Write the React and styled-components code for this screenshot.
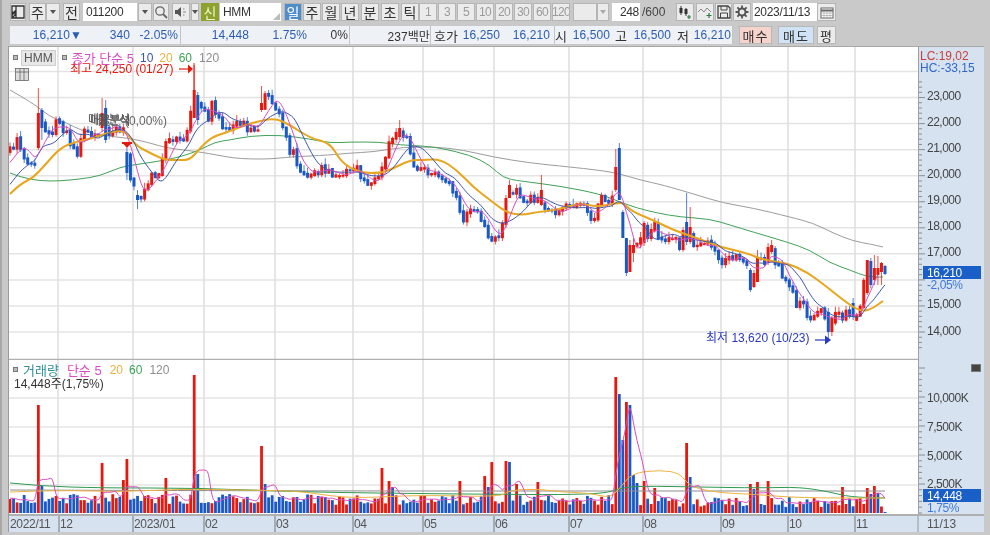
import React from "react";
import styled, { createGlobalStyle } from "styled-components";

const FONT = `"Liberation Sans", "Noto Sans CJK KR", sans-serif`;
const BLUE = "#2a5cb4";
const RED = "#e6190f";
const CANDLE_BLUE = "#1a58c6";

const Global = createGlobalStyle`
  html, body { margin: 0; padding: 0; background: #c9c9c9; overflow: hidden; }
  #root { width: 990px; height: 535px; }
`;

const Page = styled.div`
  width: 990px; height: 535px; background: #c9c9c9; font: 12px ${FONT};
  color: #333; box-sizing: border-box; filter: blur(0.4px); overflow: hidden;
  border-left: 2px solid #a8a8a8; display: flex; flex-direction: column;
`;
const Toolbar = styled.div`
  display: flex; align-items: center; height: 24px; padding-left: 8px; flex: none;
`;
const Tool = styled.div`
  flex: none; box-sizing: border-box; width: ${p => p.$w}px; height: 18px; margin-left: ${p => p.$ml || 0}px;
  display: flex; align-items: center; justify-content: center; font-size: 14px;
  background: ${p => p.$active ? "#4f8ccb" : "#ebebeb"};
  color: ${p => p.$active ? "#fff" : p.$dim ? "#9a9a9a" : "#333"};
  border: 1px solid ${p => p.$active ? "#4f8ccb" : "#f8f8f8"};
  outline: 1px solid #b5b5b5; outline-offset: -1px; letter-spacing: ${p => p.$dim ? "-0.6px" : "0"};
  ${p => p.$dim && "font-size: 12px;"}
`;
const Caret = styled.span`
  width: 0; height: 0; border: 3.5px solid transparent; border-top: 4px solid ${p => p.$dim ? "#aaa" : "#555"}; border-bottom: 0;
`;
const Field = styled.div`
  flex: none; box-sizing: border-box; width: ${p => p.$w}px; height: 18px; margin-left: ${p => p.$ml || 0}px;
  background: #fff; display: flex; align-items: center; padding: 0 ${p => p.$pad ?? 3}px;
  justify-content: ${p => p.$right ? "flex-end" : "flex-start"}; font-size: 12px; letter-spacing: -0.3px; position: relative;
`;
const Grip = styled.span`
  position: absolute; right: 1px; bottom: 1px; width: 0; height: 0;
  border-left: 7px solid transparent; border-bottom: 7px solid #bbb;
`;
const Tag = styled.div`
  flex: none; width: 18px; height: 18px; margin-left: ${p => p.$ml || 0}px; background: #8ca12e; color: #eef3c8;
  display: flex; align-items: center; justify-content: center; font-size: 14px;
`;
const Plain = styled.div`
  flex: none; width: ${p => p.$w}px; margin-left: ${p => p.$ml || 0}px; color: #444; font-size: 12px;
`;
const InfoRow = styled.div`
  display: flex; height: 18px; margin-top: 2px; padding-left: 8px; flex: none;
`;
const Cell = styled.div`
  flex: none; box-sizing: border-box; width: ${p => p.$w}px; margin-left: ${p => p.$ml || 0}px;
  background: #eef1f5; display: flex; align-items: center; border-right: 1px solid #c4c4c4;
`;
const Value = styled.span`
  flex: none; width: ${p => p.$w}px; text-align: right; font-size: ${p => p.$ko ? 13 : 12}px; white-space: nowrap;
  letter-spacing: 0.1px; color: ${p => p.$dark ? "#333" : BLUE};
`;
const Trade = styled.div`
  flex: none; box-sizing: border-box; width: ${p => p.$w}px; margin-left: ${p => p.$ml || 0}px;
  background: ${p => p.$bg}; color: #333; display: flex; align-items: center; justify-content: center;
  font-size: 13px; letter-spacing: 1px; border: 1px solid #b8b8b8;
`;
const Frame = styled.div`
  margin: 2px 0 0 7px; width: 975px; height: 485px; flex: none; display: grid;
  grid-template-columns: 909px 66px; grid-template-rows: 313px 154px 18px; background: #fff;
  border-top: 1px solid #a8a8a8; box-sizing: content-box; box-shadow: -1px 0 #9a9a9a;
`;
const Pane = styled.div`
  position: relative; background: #fff; overflow: hidden;
`;
const AxisPane = styled.div`
  position: relative; background: #d6e2f0; overflow: hidden; border-left: 1px solid #a0a0a0; box-sizing: border-box;
`;
const DateRow = styled.div`
  grid-column: 1 / -1; background: #d6e2f0; border-top: 2px solid #b0b0b0; box-sizing: border-box; overflow: hidden;
`;
const Drawing = styled.svg`
  display: block; font-family: ${FONT};
`;
const Legend = styled.div`
  position: absolute; left: ${p => p.$left}px; top: ${p => p.$top}px; display: flex; align-items: center; font-size: 12px; white-space: nowrap;
`;
const Item = styled.span`
  color: ${p => p.$c}; margin-left: ${p => p.$ml || 0}px; font-size: ${p => p.$ko ? 13 : 12}px;
`;
const Chip = styled.span`
  margin-left: 3px; padding: 0 2px; height: 14px; line-height: 14px; background: #e7e7e7; border: 1px solid #cfcfcf; color: #555; font-size: 12px;
`;
const Dot = styled.span`
  width: 5px; height: 5px; background: #bbb; border: 1px solid #777; box-sizing: border-box; margin-left: ${p => p.$ml || 0}px;
`;
const Corner = styled.div`
  position: absolute; right: 3px; top: 4px; width: 8px; height: 6px; background: #444; border: 1px solid #777;
`;

function rng(seed) {
  let s = seed;
  return () => { s = (s * 16807) % 2147483647; return (s - 1) / 2147483646; };
}
const interp = (w, x) => {
  if (x <= w[0][0]) return w[0][1];
  for (let i = 1; i < w.length; i++) {
    if (x <= w[i][0]) {
      const t = (x - w[i - 1][0]) / (w[i][0] - w[i - 1][0]);
      return w[i - 1][1] + t * (w[i][1] - w[i - 1][1]);
    }
  }
  return w[w.length - 1][1];
};

const closeW = [[10,152],[13,145],[18,140],[21,148],[25,157],[30,163],[34,170],[38,128],[43,123],[50,137],[56,123],[60,117],[65,135],[68,135],[74,150],[77,152],[81,135],[86,130],[92,135],[99,138],[102,115],[106,125],[110,135],[115,125],[120,130],[124,132],[127,157],[130,180],[134,190],[137,198],[140,198],[146,183],[152,172],[155,175],[160,173],[165,147],[171,135],[178,140],[182,140],[188,125],[194,100],[197,107],[204,112],[207,120],[212,105],[215,112],[220,120],[225,130],[230,132],[235,125],[240,122],[247,127],[258,127],[262,103],[265,95],[270,100],[275,103],[280,110],[284,128],[290,150],[293,150],[296,163],[301,170],[305,175],[311,172],[318,170],[322,170],[328,168],[335,177],[340,176],[350,170],[358,170],[365,182],[371,185],[378,175],[383,167],[388,148],[392,137],[398,130],[403,135],[407,140],[413,163],[418,172],[422,167],[427,173],[434,172],[440,178],[445,182],[450,185],[455,193],[458,203],[461,217],[465,218],[470,210],[476,205],[481,217],[486,230],[490,237],[496,237],[501,232],[506,200],[510,192],[516,190],[520,200],[525,200],[530,197],[536,200],[540,200],[543,205],[548,208],[553,213],[557,217],[561,210],[565,203],[570,205],[577,203],[580,205],[585,208],[590,215],[595,222],[598,205],[600,197],[608,200],[612,197],[615,170],[620,198],[623,236],[627,272],[630,247],[634,247],[640,240],[643,225],[648,235],[654,222],[660,243],[664,240],[668,237],[676,240],[679,250],[683,232],[686,238],[690,232],[693,248],[698,247],[710,243],[716,250],[718,260],[722,266],[724,260],[730,258],[735,255],[740,258],[747,265],[749,288],[753,275],[757,260],[766,262],[768,250],[772,247],[775,265],[780,268],[788,288],[792,290],[798,308],[801,300],[810,320],[815,318],[821,305],[828,330],[833,320],[838,310],[842,318],[847,312],[853,318],[860,310],[866,264],[871,282],[875,270],[878,270],[881,262],[885,272]];

const candleFix = [[38,113,148,88,150,"r"],[43,110,128,108,140,"b"],[102,113,128,98,132,"r"],[107,108,140,100,143,"b"],[127,152,173,148,180,"b"],[137,195,200,190,209,"b"],[194,90,118,65,118,"r"],[197,95,120,92,125,"b"],[262,103,110,86,112,"r"],[398,128,137,120,140,"r"],[506,198,225,195,228,"r"],[510,185,198,180,198,"r"],[540,190,205,175,206,"r"],[615,167,190,149,192,"r"],[620,148,200,143,200,"b"],[623,212,238,210,238,"b"],[627,238,273,238,276,"b"],[630,245,272,240,272,"r"],[634,245,253,238,262,"r"],[643,223,243,221,246,"r"],[686,222,242,193,245,"b"],[690,227,242,207,244,"r"],[749,270,290,268,292,"b"],[753,273,287,270,288,"r"],[757,257,282,250,282,"r"],[768,247,263,243,265,"r"],[772,245,252,240,254,"r"],[828,312,332,308,340,"b"],[833,318,332,316,336,"r"],[853,303,317,298,320,"b"],[866,260,293,260,295,"r"],[871,261,285,258,288,"b"],[875,268,280,255,285,"r"],[878,268,275,256,285,"r"],[881,263,272,262,285,"r"],[885,266,274,265,275,"b"]];

const volFix = [[38,405,"r"],[42,486,"b"],[102,463,"r"],[126,459,"r"],[123,480,"r"],[165,478,"r"],[194,375,"r"],[197,474,"b"],[262,446,"r"],[265,484,"b"],[382,468,"r"],[389,481,"r"],[392,487,"b"],[459,481,"r"],[484,476,"r"],[488,487,"b"],[491,462,"r"],[505,461,"r"],[509,462,"b"],[516,484,"r"],[538,482,"r"],[615,377,"r"],[620,394,"b"],[624,440,"b"],[626,402,"r"],[629,405,"b"],[633,475,"b"],[636,483,"b"],[643,481,"r"],[653,488,"r"],[686,443,"r"],[690,477,"b"],[750,484,"r"],[753,489,"b"],[757,482,"r"],[768,481,"r"],[841,487,"r"],[866,488,"r"],[870,494,"b"],[873,486,"r"],[877,493,"b"]];

const COUNT = 248;
const barX = i => 10 + (i * 875) / (COUNT - 1);
const nearest = x => Math.round(((x - 10) * (COUNT - 1)) / 875);

const r = rng(4711);
const closes = [];
const smooth = [];
const candles = [];
for (let i = 0; i < COUNT; i++) {
  const x = barX(i);
  const s = interp(closeW, x);
  const amp = x > 330 ? 7 : 10;
  const c = s + (r() - 0.5) * amp;
  const o = i ? closes[i - 1] : c + 4;
  closes.push(c);
  smooth.push(s);
  const top = Math.min(o, c) - r() * 1.5, bot = Math.max(o, c) + 1.5;
  candles.push({ x, top, bot, wt: top - r() * 6, wb: bot + r() * 4, red: c < o });
}
candleFix.forEach(([x, t, b, wt, wb, col]) => {
  candles[nearest(x)] = { x: barX(nearest(x)), top: t, bot: b, wt, wb, red: col === "r" };
});

const vols = [];
const volRed = candles.map(c => c.red);
for (let i = 0; i < COUNT; i++) {
  const x = barX(i);
  const baseTop = x < 330 ? 498 : x < 620 ? 499 : 501;
  vols.push(baseTop + r() * 10 - 4);
}
volFix.forEach(([x, t, c]) => { vols[nearest(x)] = t; volRed[nearest(x)] = c === "r"; });
vols[COUNT - 1] = 512;

const sma = (arr, n, pad) => arr.map((_, i) => {
  let s = 0;
  for (let k = 0; k < n; k++) s += i - k >= 0 ? arr[i - k] : pad;
  return s / n;
});
const curve = w => {
  let d = `M${w[0][0]} ${w[0][1]}`;
  for (let i = 1; i < w.length - 1; i++) {
    const mx = (w[i][0] + w[i + 1][0]) / 2, my = (w[i][1] + w[i + 1][1]) / 2;
    d += `Q${w[i][0]} ${w[i][1]} ${mx} ${my}`;
  }
  const last = w[w.length - 1];
  return `${d}L${last[0]} ${last[1]}`;
};
const seriesPts = arr => arr.map((v, i) => [+barX(i).toFixed(1), +v.toFixed(1)]);

const ma5 = sma(smooth, 5, 165);
const ma10 = sma(smooth, 10, 188);
const ma20 = [[10,194],[20,184],[33,178],[45,165],[60,148],[75,142],[90,139],[110,132],[125,130],[135,145],[150,153],[165,160],[178,160],[190,160],[200,148],[212,137],[225,133],[240,127],[255,122],[275,118],[290,125],[310,138],[330,143],[340,160],[350,168],[363,173],[380,173],[390,170],[410,160],[423,160],[440,159],[457,170],[473,187],[490,200],[507,213],[523,215],[537,212],[557,210],[580,203],[597,207],[617,203],[623,203],[633,212],[653,220],[673,230],[697,238],[720,247],[747,253],[763,260],[787,263],[807,272],[827,287],[847,303],[860,311],[870,310],[883,301]];
const ma60 = [[10,173],[20,177],[40,181],[60,181],[80,179],[100,176],[120,167],[140,164],[160,161],[180,157],[200,150],[215,142],[230,140],[250,136],[280,135],[310,139],[330,143],[350,142],[380,142],[400,145],[423,146],[440,148],[470,155],[490,165],[503,178],[520,181],[560,186],[600,194],[620,202],[637,208],[657,213],[680,217],[710,219],[730,225],[753,232],[787,242],[810,250],[830,263],[850,270],[867,277],[883,277]];
const ma120 = [[10,90],[33,103],[50,117],[67,123],[80,130],[100,135],[117,137],[133,139],[150,143],[167,148],[200,152],[217,155],[233,158],[250,159],[270,159],[290,157],[330,155],[350,153],[373,152],[403,147],[437,147],[463,150],[493,157],[530,163],[570,167],[597,170],[617,173],[640,180],[663,185],[697,195],[723,203],[753,208],[790,217],[813,223],[833,233],[853,241],[870,244],[883,247]];

const volMa5 = sma(vols, 5, 498);
const volMa20 = [[10,492],[60,490],[120,492],[180,489],[240,490],[300,491],[330,496],[360,498],[420,495],[500,497],[510,490],[540,489],[560,492],[590,493],[610,498],[620,488],[632,473],[660,470],[680,473],[690,487],[720,493],[750,494],[800,498],[885,498]];
const volMa60 = [[10,483],[40,486],[100,488],[200,488],[300,492],[450,494],[600,495],[620,488],[640,486],[700,487],[760,488],[800,487],[830,492],[850,497],[885,498]];
const volMa120 = [[10,490],[300,491],[600,491],[625,491],[885,491]];

const priceTicks = [23000,22000,21000,20000,19000,18000,17000,16000,15000,14000];
const priceY = p => 332 - (p - 14000) * 0.02605;
const vGrid = [58,133,204,275,353,423,494,569,643,721,788,855];
const fmt = n => n.toLocaleString("en-US");

const MaLine = styled.path`
  fill: none; stroke: ${p => p.$c}; stroke-width: ${p => p.$sw || 1}; stroke-linejoin: round;
`;

const Candles = () => (
  <>
    {candles.map((c, i) => {
      const col = c.red ? RED : CANDLE_BLUE;
      return (
        <g key={i}>
          <line x1={c.x} x2={c.x} y1={c.wt} y2={c.wb} stroke={col} strokeWidth="1" opacity="0.75" />
          <rect x={c.x - 1.5} width="3" y={c.top} height={c.bot - c.top} fill={col} />
        </g>
      );
    })}
  </>
);

const PricePlot = () => (
  <Drawing width="909" height="313" viewBox="9 47 909 313" fontSize="12">
    {[24000, ...priceTicks].map(p => <line key={p} x1="9" x2="918" y1={priceY(p)} y2={priceY(p)} stroke="#e4e4e4" strokeWidth="1.5" />)}
    {vGrid.map(x => <line key={x} x1={x} x2={x} y1="47" y2="360" stroke="#dedede" strokeWidth="1.5" />)}
    <MaLine d={curve(ma120)} $c="#9c9c9c" />
    <MaLine d={curve(ma60)} $c="#3fa257" />
    <Candles />
    <MaLine d={curve(ma20)} $c="#e8a61e" $sw={2} />
    <MaLine d={curve(seriesPts(ma10))} $c="#3b55a8" />
    <MaLine d={curve(seriesPts(ma5.slice(0, 246)))} $c="#d94cc4" />
    <text x="88" y="124" fill="#555" letterSpacing="-0.8">매물분석</text>
    <text x="90" y="125" fill="#555" letterSpacing="-1.2">매물분석</text>
    <text x="125" y="125" fill="#666">(0,00%)</text>
    <path d="M122 142h10v2h-1.5l-3.5 4-3.5-4H122z" fill={RED} />
    <text x="70" y="73" fill={RED}>최고 24,250 (01/27)</text>
    <line x1="179" x2="190" y1="69" y2="69" stroke={RED} strokeWidth="1.2" />
    <path d="M188 64.500l5 4.500-5 4.500z" fill={RED} />
    <line x1="194" x2="194" y1="63" y2="90" stroke={RED} strokeWidth="1" />
    <text x="706" y="342" fill="#2838c0">최저 13,620 (10/23)</text>
    <line x1="815" x2="826" y1="340" y2="340" stroke="#2838c0" strokeWidth="1.2" />
    <path d="M825 335.500l6 4.500-6 4.500z" fill="#2838c0" />
    <g stroke="#666" fill="#ddd" strokeWidth="0.8">
      <rect x="15.500" y="68.500" width="13" height="12" />
      <path d="M15.500 72h13M20 68.500v12M24 68.500v12" fill="none" />
    </g>
    <line x1="9" x2="918" y1="359.500" y2="359.500" stroke="#b0b0b0" strokeWidth="1.5" />
  </Drawing>
);

const PriceAxis = () => (
  <Drawing width="65" height="313" viewBox="919 47 65 313" fontSize="12">
    {Array.from({ length: 52 }).map((_, i) => {
      const p = 13400 + i * 200;
      const major = p % 1000 === 0;
      return <line key={i} x1="919" x2={major ? 925 : 922} y1={priceY(p)} y2={priceY(p)} stroke="#777" strokeWidth="0.8" />;
    })}
    {priceTicks.map(p => p !== 16000 && (
      <text key={p} x="927" y={priceY(p) + 2.500} fill="#444" letterSpacing="-0.5">{fmt(p)}</text>
    ))}
    <rect x="919" y="50" width="65" height="24" fill="#d6e2f0" />
    <text x="920" y="60" fill="#c8403a">LC:19,02</text>
    <text x="920" y="72" fill="#2f68c8">HC:-33,15</text>
    <rect x="923" y="266" width="58" height="13" fill="#1a5ec8" />
    <text x="927" y="277" fill="#fff" letterSpacing="-0.3">16,210</text>
    <text x="927" y="289" fill="#3f78d8" letterSpacing="-0.4">-2,05%</text>
  </Drawing>
);

const VolumePlot = () => (
  <Drawing width="909" height="154" viewBox="9 360 909 154" fontSize="12">
    {[398,427,456,485].map(y => <line key={y} x1="9" x2="918" y1={y} y2={y} stroke="#e4e4e4" strokeWidth="1.5" />)}
    {vGrid.map(x => <line key={x} x1={x} x2={x} y1="360" y2="514" stroke="#dedede" strokeWidth="1.5" />)}
    {vols.map((t, i) => (
      <rect key={i} x={barX(i) - 1.4} width="2.8" y={t} height={513 - t} fill={volRed[i] ? RED : CANDLE_BLUE} />
    ))}
    <MaLine d={curve(volMa120)} $c="#8d8d8d" />
    <MaLine d={curve(volMa60)} $c="#2f9a4f" />
    <MaLine d={curve(volMa20)} $c="#efb240" />
    <MaLine d={curve(seriesPts(volMa5))} $c="#d94cc4" />
  </Drawing>
);

const VolumeAxis = () => (
  <Drawing width="65" height="154" viewBox="919 360 65 154" fontSize="12">
    {Array.from({ length: 26 }).map((_, i) => {
      const y = 513 - i * 5.8;
      const major = i % 5 === 0 && i > 0;
      return <line key={i} x1="919" x2={major ? 925 : 922} y1={y} y2={y} stroke="#777" strokeWidth="0.8" />;
    })}
    {[[398,"10,000K"],[427,"7,500K"],[456,"5,000K"],[484,"2,500K"]].map(([y, t]) => (
      <text key={t} x="927" y={y + 3.500} fill="#444" letterSpacing="-0.5">{t}</text>
    ))}
    <rect x="923" y="489" width="58" height="13" fill="#1a5ec8" />
    <text x="927" y="500" fill="#fff" letterSpacing="-0.3">14,448</text>
    <text x="927" y="512" fill="#3f78d8" letterSpacing="-0.4">1,75%</text>
  </Drawing>
);

const dates = [[10,"2022/11",false],[60,"12",true],[134,"2023/01",true],[205,"02",true],[276,"03",true],[354,"04",true],[424,"05",true],[495,"06",true],[570,"07",true],[644,"08",true],[722,"09",true],[789,"10",true],[856,"11",true]];
const DateAxis = () => (
  <Drawing width="975" height="16" viewBox="9 516 975 16" fontSize="12">
    {dates.filter(d => d[2]).map(([x]) => <line key={x} x1={x - 1} x2={x - 1} y1="516" y2="532" stroke="#777" strokeWidth="1" />)}
    <line x1="918" x2="918" y1="516" y2="532" stroke="#999" strokeWidth="1" />
    {dates.map(([x, t]) => <text key={t} x={x} y="528" fill="#555" letterSpacing="-0.3">{t}</text>)}
    <text x="927" y="528" fill="#555">11/13</text>
  </Drawing>
);

const Ic = styled.svg`display: block;`;
const LayoutIcon = () => (
  <Ic width="14" height="14" viewBox="0 0 14 14"><path d="M1 1h12v12H1zM5 1v12M1 13l3-3V6L1 9z" fill="none" stroke="#333" strokeWidth="1.300"/><path d="M1 6l3 2-3 3z" fill="#333"/></Ic>
);
const SearchIcon = () => (
  <Ic width="14" height="14" viewBox="0 0 14 14"><circle cx="6" cy="6" r="4.200" fill="none" stroke="#666" strokeWidth="1.300"/><path d="M9 9l4 4" stroke="#666" strokeWidth="1.800"/></Ic>
);
const SpeakerIcon = () => (
  <Ic width="14" height="14" viewBox="0 0 14 14"><path d="M1 5h2.500L7 2v10L3.500 9H1z" fill="#555"/><path d="M9 4h1.500M9 7h3M9 10h1.500" stroke="#888" strokeWidth="1.200"/></Ic>
);
const CandleIcon = () => (
  <Ic width="16" height="14" viewBox="0 0 16 14"><path d="M4 1v9M9 3v8" stroke="#333"/><rect x="2.500" y="3" width="3" height="5" fill="#333"/><rect x="7.500" y="4" width="3" height="5" fill="#333"/><path d="M12 10v4M10 12h4" stroke="#2b7a3a" strokeWidth="1.200"/></Ic>
);
const LineIcon = () => (
  <Ic width="16" height="14" viewBox="0 0 16 14"><path d="M1 7l3-3 3 3 3-4 4 4" fill="none" stroke="#888"/><path d="M12 8v5M9.500 10.500h5" stroke="#2b7a3a" strokeWidth="1.200"/></Ic>
);
const SaveIcon = () => (
  <Ic width="14" height="14" viewBox="0 0 14 14"><path d="M1 1h10l2 2v10H1z" fill="none" stroke="#444" strokeWidth="1.300"/><path d="M4 1v4h6V1M3.500 13V8h7v5" fill="none" stroke="#444"/></Ic>
);
const GearIcon = () => (
  <Ic width="14" height="14" viewBox="0 0 14 14"><circle cx="7" cy="7" r="3.500" fill="none" stroke="#555" strokeWidth="2"/><path d="M7 0.500v3M7 10.500v3M0.500 7h3M10.500 7h3M2.400 2.400l2.100 2.100M9.500 9.500l2.100 2.100M11.600 2.400L9.500 4.500M4.500 9.500l-2.100 2.100" stroke="#555" strokeWidth="1.800"/></Ic>
);
const CalIcon = () => (
  <Ic width="14" height="13" viewBox="0 0 14 13"><rect x="1" y="2" width="12" height="10" fill="#fff" stroke="#666"/><path d="M1 4.500h12" stroke="#666" strokeWidth="2"/><path d="M1 7h12M1 9.500h12M4 5v7M7 5v7M10 5v7" stroke="#aaa" strokeWidth="0.700"/></Ic>
);

export default function App() {
  return (
    <Page>
      <Global />
      <Toolbar>
        <Tool $w={16}><LayoutIcon /></Tool>
        <Tool $w={17} $ml={3}>주</Tool>
        <Tool $w={14}><Caret /></Tool>
        <Tool $w={17} $ml={3}>전</Tool>
        <Field $w={54} $ml={3}>011200</Field>
        <Tool $w={14} $ml={1}><Caret /></Tool>
        <Tool $w={16} $ml={1}><SearchIcon /></Tool>
        <Tool $w={18} $ml={3}><SpeakerIcon /></Tool>
        <Tool $w={8} $ml={1}><Caret /></Tool>
        <Tag $ml={2}>신</Tag>
        <Field $w={61} $ml={1}>HMM<Grip /></Field>
        <Tool $w={18} $ml={3} $active>일</Tool>
        <Tool $w={18} $ml={1}>주</Tool>
        <Tool $w={18} $ml={1}>월</Tool>
        <Tool $w={18} $ml={1}>년</Tool>
        <Tool $w={18} $ml={2}>분</Tool>
        <Tool $w={18} $ml={2}>초</Tool>
        <Tool $w={18} $ml={2}>틱</Tool>
        {["1","3","5","10","20","30","60","120"].map((t, i) => <Tool key={t} $w={18} $ml={i ? 1 : 0} $dim>{t}</Tool>)}
        <Tool $w={24} $ml={3} />
        <Tool $w={12}><Caret $dim /></Tool>
        <Field $w={28} $ml={3} $right $pad={1}>248</Field>
        <Plain $w={26} $ml={2}>/600</Plain>
        <Tool $w={18} $ml={8}><CandleIcon /></Tool>
        <Tool $w={18} $ml={2}><LineIcon /></Tool>
        <Tool $w={17} $ml={1}><SaveIcon /></Tool>
        <Tool $w={18} $ml={1}><GearIcon /></Tool>
        <Field $w={64} $ml={2} $pad={1}>2023/11/13</Field>
        <Tool $w={19}><CalIcon /></Tool>
      </Toolbar>
      <InfoRow>
        <Cell $w={171}>
          <Value $w={60}>16,210</Value>
          <Value $w={12}>▼</Value>
          <Value $w={48}>340</Value>
          <Value $w={48}>-2.05%</Value>
        </Cell>
        <Cell $w={169}>
          <Value $w={68}>14,448</Value>
          <Value $w={58}>1.75%</Value>
          <Value $w={41} $dark>0%</Value>
        </Cell>
        <Cell $w={81}><Value $w={80} $dark>237백만</Value></Cell>
        <Cell $w={124}>
          <Value $w={27} $dark $ko>호가</Value>
          <Value $w={42}>16,250</Value>
          <Value $w={50}>16,210</Value>
        </Cell>
        <Cell $w={178}>
          <Value $w={10} $dark $ko>시</Value>
          <Value $w={45}>16,500</Value>
          <Value $w={17} $dark $ko>고</Value>
          <Value $w={44}>16,500</Value>
          <Value $w={18} $dark $ko>저</Value>
          <Value $w={42}>16,210</Value>
        </Cell>
        <Trade $w={33} $ml={6} $bg="#f6d3cb">매수</Trade>
        <Trade $w={36} $ml={6} $bg="#cfe2f6">매도</Trade>
        <Trade $w={19} $ml={3} $bg="#ebebeb">평</Trade>
      </InfoRow>
      <Frame>
        <Pane>
          <PricePlot />
          <Legend $left={4} $top={1}>
            <Dot />
            <Chip>HMM</Chip>
            <Dot $ml={6} />
            <Item $c="#d94cc4" $ml={5} $ko>종가 단순 5</Item>
            <Item $c="#3b55a8" $ml={6}>10</Item>
            <Item $c="#eeb040" $ml={6}>20</Item>
            <Item $c="#3fa257" $ml={6}>60</Item>
            <Item $c="#8d8d8d" $ml={7}>120</Item>
          </Legend>
        </Pane>
        <AxisPane><PriceAxis /></AxisPane>
        <Pane>
          <VolumePlot />
          <Legend $left={4} $top={0}>
            <Dot />
            <Item $c="#2f8f9a" $ml={5} $ko>거래량</Item>
            <Item $c="#d94cc4" $ml={8} $ko>단순 5</Item>
            <Item $c="#eeb040" $ml={8}>20</Item>
            <Item $c="#3fa257" $ml={6}>60</Item>
            <Item $c="#8d8d8d" $ml={7}>120</Item>
          </Legend>
          <Legend $left={5} $top={14}><Item $c="#333">14,448주(1,75%)</Item></Legend>
        </Pane>
        <AxisPane><VolumeAxis /><Corner /></AxisPane>
        <DateRow><DateAxis /></DateRow>
      </Frame>
    </Page>
  );
}
